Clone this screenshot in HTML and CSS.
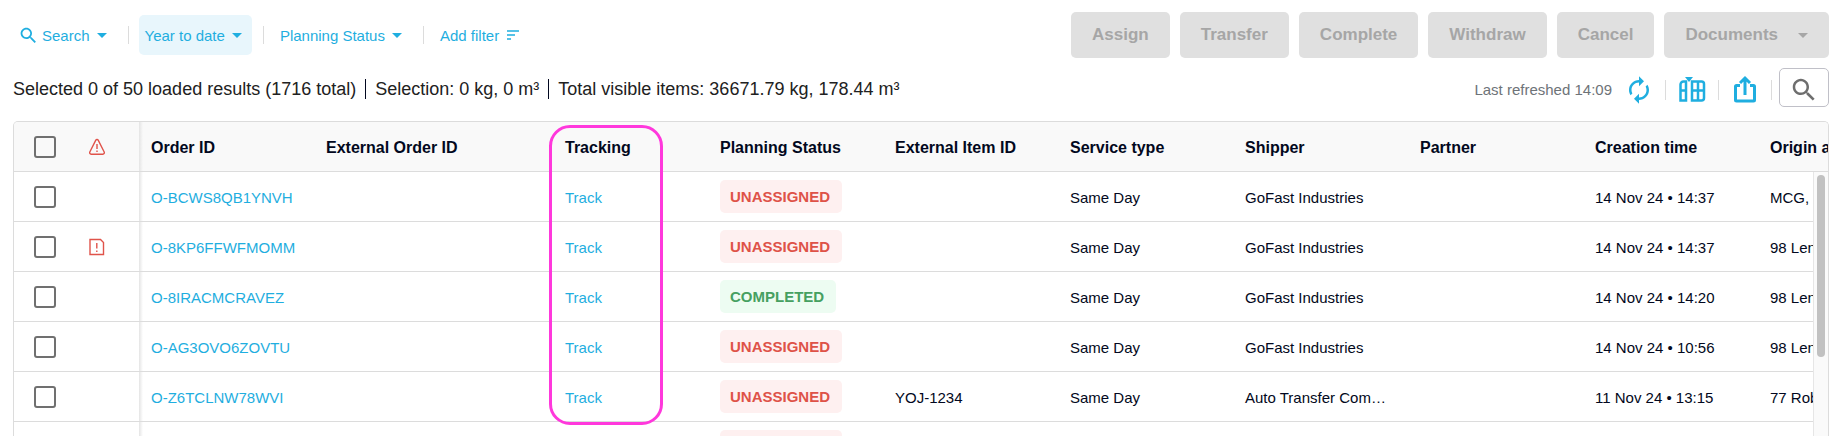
FILE: index.html
```
<!DOCTYPE html>
<html lang="en">
<head>
  <meta charset="utf-8">
  <title>Orders</title>
  <link rel="stylesheet" href="styles.css">
</head>
<body>
  <header class="toolbar">
    <nav class="filters">
      <button class="filter" type="button">
        <svg class="icon-search-small" viewBox="0 0 24 24"><path d="M15.500 14h-.79l-.28-.27C15.410 12.590 16 11.110 16 9.500 16 5.910 13.090 3 9.500 3S3 5.910 3 9.500 5.910 16 9.500 16c1.610 0 3.090-.59 4.230-1.570l.27.28v.79l5 4.990L20.490 19l-4.990-5zm-6 0C7.010 14 5 11.990 5 9.500S7.010 5 9.500 5 14 7.010 14 9.500 11.990 14 9.500 14z"/></svg>
        Search <span class="caret"></span>
      </button>
      <button class="filter active" type="button">Year to date <span class="caret"></span></button>
      <button class="filter" type="button">Planning Status <span class="caret"></span></button>
      <button class="filter" type="button">
        Add filter
        <svg class="icon-lines" viewBox="0 0 12 10"><path d="M0 1h12M0 5h8M0 9h4"/></svg>
      </button>
    </nav>
    <div class="actions">
      <button class="action" type="button" disabled>Assign</button>
      <button class="action" type="button" disabled>Transfer</button>
      <button class="action" type="button" disabled>Complete</button>
      <button class="action" type="button" disabled>Withdraw</button>
      <button class="action" type="button" disabled>Cancel</button>
      <button class="action" type="button" disabled>Documents <span class="caret"></span></button>
    </div>
  </header>

  <section class="summary">
    <div class="totals">
      <span>Selected 0 of 50 loaded results (1716 total)</span>
      <span>Selection: 0 kg, 0 m³</span>
      <span>Total visible items: 36671.79 kg, 178.44 m³</span>
    </div>
    <div class="tools">
      <span class="refreshed">Last refreshed 14:09</span>
      <button class="tool" type="button" aria-label="Refresh">
        <svg viewBox="0 0 24 24"><path d="M12 6v3l4-4-4-4v3c-4.420 0-8 3.580-8 8 0 1.570.46 3.030 1.240 4.260L6.700 14.800c-.45-.83-.7-1.790-.7-2.800 0-3.310 2.690-6 6-6zm6.760 1.740L17.300 9.200c.44.84.7 1.790.7 2.800 0 3.310-2.690 6-6 6v-3l-4 4 4 4v-3c4.420 0 8-3.580 8-8 0-1.570-.46-3.030-1.240-4.260z"/></svg>
      </button>
      <span class="divider"></span>
      <button class="tool" type="button" aria-label="Columns">
        <svg viewBox="0 0 30 30"><path d="M8 2h8l-4 5z"/><path class="line" d="M9 6.500H6.500a3 3 0 0 0-3 3v16H9zM3.500 15.500H9M15 6.500h9.500a2.500 2.500 0 0 1 2.500 2.500v14a2.500 2.500 0 0 1-2.500 2.500H15zM21 6.500v19M15 15.500h12"/></svg>
      </button>
      <span class="divider"></span>
      <button class="tool" type="button" aria-label="Share">
        <svg viewBox="0 0 30 30"><path class="line wide" d="M10 10.500H6.500a1 1 0 0 0-1 1v13.500a1 1 0 0 0 1 1h17a1 1 0 0 0 1-1V11.500a1 1 0 0 0-1-1H20M15 20V4M10 8l5-5 5 5"/></svg>
      </button>
      <span class="divider last"></span>
      <button class="search-button" type="button" aria-label="Search table">
        <svg viewBox="0 0 24 24"><path d="M15.500 14h-.79l-.28-.27C15.410 12.590 16 11.110 16 9.500 16 5.910 13.090 3 9.500 3S3 5.910 3 9.500 5.910 16 9.500 16c1.610 0 3.090-.59 4.230-1.570l.27.28v.79l5 4.990L20.490 19l-4.990-5zm-6 0C7.010 14 5 11.990 5 9.500S7.010 5 9.500 5 14 7.010 14 9.500 11.990 14 9.500 14z"/></svg>
      </button>
    </div>
  </section>

  <main class="grid">
    <table class="orders">
      <colgroup>
        <col class="col-check">
        <col class="col-alert">
        <col class="col">
        <col class="col-external">
        <col class="col-tracking">
        <col class="col">
        <col class="col">
        <col class="col">
        <col class="col">
        <col class="col">
        <col class="col">
        <col class="col">
      </colgroup>
      <thead>
        <tr>
          <th class="check"><input type="checkbox" aria-label="Select all"></th>
          <th class="alert"><svg viewBox="0 0 18 18"><path d="M7.800 2.200a1.400 1.400 0 0 1 2.400 0l6 11.800a1.500 1.500 0 0 1-1.300 2.200H3.100A1.500 1.500 0 0 1 1.800 14z"/><path d="M9 6v5M9 12.500v1.500"/></svg></th>
          <th class="first">Order ID</th>
          <th>External Order ID</th>
          <th>Tracking</th>
          <th>Planning Status</th>
          <th>External Item ID</th>
          <th>Service type</th>
          <th>Shipper</th>
          <th>Partner</th>
          <th>Creation time</th>
          <th>Origin address</th>
        </tr>
      </thead>
      <tbody>
        <tr>
          <td class="check"><input type="checkbox" aria-label="Select O-BCWS8QB1YNVH"></td>
          <td class="alert"></td>
          <td class="first"><a href="#">O-BCWS8QB1YNVH</a></td>
          <td></td>
          <td><a href="#">Track</a></td>
          <td class="status"><span class="badge unassigned">UNASSIGNED</span></td>
          <td></td>
          <td>Same Day</td>
          <td>GoFast Industries</td>
          <td></td>
          <td>14 Nov 24 • 14:37</td>
          <td>MCG,</td>
        </tr>
        <tr>
          <td class="check"><input type="checkbox" aria-label="Select O-8KP6FFWFMOMM"></td>
          <td class="alert"><svg viewBox="0 0 18 18"><path d="M2 1.500h10.500l3 3v12H2z"/><path d="M8.800 5v5.500M8.800 12.500v1.500"/></svg></td>
          <td class="first"><a href="#">O-8KP6FFWFMOMM</a></td>
          <td></td>
          <td><a href="#">Track</a></td>
          <td class="status"><span class="badge unassigned">UNASSIGNED</span></td>
          <td></td>
          <td>Same Day</td>
          <td>GoFast Industries</td>
          <td></td>
          <td>14 Nov 24 • 14:37</td>
          <td>98 Len</td>
        </tr>
        <tr>
          <td class="check"><input type="checkbox" aria-label="Select O-8IRACMCRAVEZ"></td>
          <td class="alert"></td>
          <td class="first"><a href="#">O-8IRACMCRAVEZ</a></td>
          <td></td>
          <td><a href="#">Track</a></td>
          <td class="status"><span class="badge completed">COMPLETED</span></td>
          <td></td>
          <td>Same Day</td>
          <td>GoFast Industries</td>
          <td></td>
          <td>14 Nov 24 • 14:20</td>
          <td>98 Len</td>
        </tr>
        <tr>
          <td class="check"><input type="checkbox" aria-label="Select O-AG3OVO6ZOVTU"></td>
          <td class="alert"></td>
          <td class="first"><a href="#">O-AG3OVO6ZOVTU</a></td>
          <td></td>
          <td><a href="#">Track</a></td>
          <td class="status"><span class="badge unassigned">UNASSIGNED</span></td>
          <td></td>
          <td>Same Day</td>
          <td>GoFast Industries</td>
          <td></td>
          <td>14 Nov 24 • 10:56</td>
          <td>98 Len</td>
        </tr>
        <tr>
          <td class="check"><input type="checkbox" aria-label="Select O-Z6TCLNW78WVI"></td>
          <td class="alert"></td>
          <td class="first"><a href="#">O-Z6TCLNW78WVI</a></td>
          <td></td>
          <td><a href="#">Track</a></td>
          <td class="status"><span class="badge unassigned">UNASSIGNED</span></td>
          <td>YOJ-1234</td>
          <td>Same Day</td>
          <td>Auto Transfer Com…</td>
          <td></td>
          <td>11 Nov 24 • 13:15</td>
          <td>77 Rob</td>
        </tr>
        <tr>
          <td class="check"><input type="checkbox" aria-label="Select order"></td>
          <td class="alert"></td>
          <td class="first"></td>
          <td></td>
          <td></td>
          <td class="status"><span class="badge unassigned"></span></td>
          <td></td>
          <td></td>
          <td></td>
          <td></td>
          <td></td>
          <td></td>
        </tr>
      </tbody>
    </table>
    <div class="scrollbar"><div class="thumb"></div></div>
    <div class="highlight"></div>
  </main>
</body>
</html>
```

FILE: styles.css
```
* {
  box-sizing: border-box;
}
body {
  display: flex;
  flex-direction: column;
  height: 100vh;
  margin: 0;
  padding: 12px 11px 0 13px;
  overflow: hidden;
  background: #fff;
  color: #212121;
  font-family: "Liberation Sans", Arial, sans-serif;
}
button {
  margin: 0;
  border: 0;
  background: none;
  font-family: inherit;
}
a {
  color: #1faee0;
  text-decoration: none;
}
.caret {
  border: 5px solid transparent;
  border-top-color: currentColor;
  border-bottom: 0;
}

/* Top bar: filters on the left, actions on the right */
.toolbar {
  display: flex;
  justify-content: space-between;
  align-items: center;
}
.filters {
  display: flex;
  align-items: center;
}
.filter {
  display: flex;
  align-items: center;
  gap: 7px;
  height: 40px;
  padding: 0 10px 0 6px;
  border-radius: 5px;
  color: #1faee0;
  font-size: 15px;
}
.filter + .filter {
  position: relative;
  margin-left: 22px;
}
.filter + .filter::before {
  content: "";
  position: absolute;
  left: -11px;
  top: 11px;
  width: 1px;
  height: 18px;
  background: #dcdcdc;
}
.filter.active {
  background: #e8f6fc;
}
.icon-search-small {
  width: 21px;
  height: 21px;
  margin: 0 -4px 0 -1px;
  fill: currentColor;
}
.icon-lines {
  width: 12px;
  height: 10px;
  margin-left: 1px;
  fill: none;
  stroke: currentColor;
  stroke-width: 1.5;
}
.actions {
  display: flex;
  gap: 10px;
}
.action {
  display: flex;
  align-items: center;
  height: 46px;
  padding: 0 21px;
  border-radius: 5px;
  background: #e0e0e0;
  color: #a6a6a6;
  font-size: 17px;
  font-weight: bold;
}
.action .caret {
  margin-left: 20px;
}

/* Totals and table tools */
.summary {
  display: flex;
  justify-content: space-between;
  align-items: center;
  margin: 10px 0 14px;
}
.totals {
  display: flex;
  padding-top: 3px;
  font-size: 18px;
  line-height: 20px;
}
.totals span + span {
  margin-left: 9px;
  padding-left: 9px;
  border-left: 1px solid #020820;
}
.tools {
  display: flex;
  align-items: center;
}
.refreshed {
  margin: 3px 12px 0 0;
  color: #6e7378;
  font-size: 15px;
}
.tool {
  display: flex;
  margin-top: 4px;
  padding: 0;
  color: #1faee0;
}
.tool svg {
  width: 30px;
  height: 30px;
  fill: currentColor;
}
.tool .line {
  fill: none;
  stroke: currentColor;
  stroke-width: 2.5;
}
.tool .wide {
  stroke-width: 3;
}
.divider {
  width: 1px;
  height: 20px;
  margin: 4px 11px 0;
  background: #dcdcdc;
}
.divider.last {
  margin-right: 7px;
}
.search-button {
  display: flex;
  justify-content: center;
  align-items: center;
  width: 50px;
  height: 39px;
  padding: 0;
  border: 1px solid #c0c0c8;
  border-radius: 5px;
  color: #6e6e6e;
}
.search-button svg {
  width: 30px;
  height: 30px;
  margin-top: 4px;
  fill: currentColor;
}

/* Orders table */
.grid {
  position: relative;
  flex: 1;
  border: 1px solid #dcdcdc;
  border-bottom: 0;
  border-radius: 5px 5px 0 0;
  overflow: hidden;
  color: #020820;
}
.orders {
  table-layout: fixed;
  width: 1919px;
  border-collapse: separate;
  border-spacing: 0;
}
.col-check {
  width: 61px;
}
.col-alert {
  width: 64px;
}
.col {
  width: 175px;
}
.col-external {
  width: 239px;
}
.col-tracking {
  width: 155px;
}
.orders th,
.orders td {
  height: 50px;
  padding: 2px 12px 0;
  border-bottom: 1px solid #dcdcdc;
  text-align: left;
  white-space: nowrap;
}
.orders th {
  background-color: #f9f9f9;
  font-size: 16px;
}
.orders td {
  font-size: 15px;
}
.orders .check {
  padding: 0 0 0 20px;
}
.orders .alert {
  padding: 0 0 0 13px;
}
.orders .status {
  padding-top: 0;
}
.orders .first {
  background-image: linear-gradient(to right, #e4e4e4, rgba(228, 228, 228, 0));
  background-size: 4px 100%;
  background-repeat: no-repeat;
}
.alert svg {
  display: block;
  width: 18px;
  height: 18px;
  fill: none;
  stroke: #e0534a;
  stroke-width: 1.4;
}
input[type="checkbox"] {
  appearance: none;
  display: block;
  width: 22px;
  height: 22px;
  margin: 0;
  border: 2px solid #707070;
  border-radius: 3px;
}
.badge {
  display: block;
  width: fit-content;
  height: 33px;
  padding: 0 10px;
  border-radius: 5px;
  font-weight: bold;
  line-height: 33px;
}
.unassigned {
  min-width: 122px;
  background: #fef0f0;
  color: #de5248;
}
.completed {
  min-width: 116px;
  background: #edfcf2;
  color: #46a061;
}
.scrollbar {
  position: absolute;
  top: 50px;
  right: 0;
  bottom: 0;
  width: 15px;
  padding: 3px;
  border-left: 1px solid #e6e6e6;
  background: #fafafa;
}
.thumb {
  width: 8px;
  height: 182px;
  border-radius: 4px;
  background: #c1c1c1;
}
.highlight {
  position: absolute;
  top: 3px;
  left: 535px;
  width: 114px;
  height: 300px;
  border: 3px solid #ff38dc;
  border-radius: 21px;
}
```
